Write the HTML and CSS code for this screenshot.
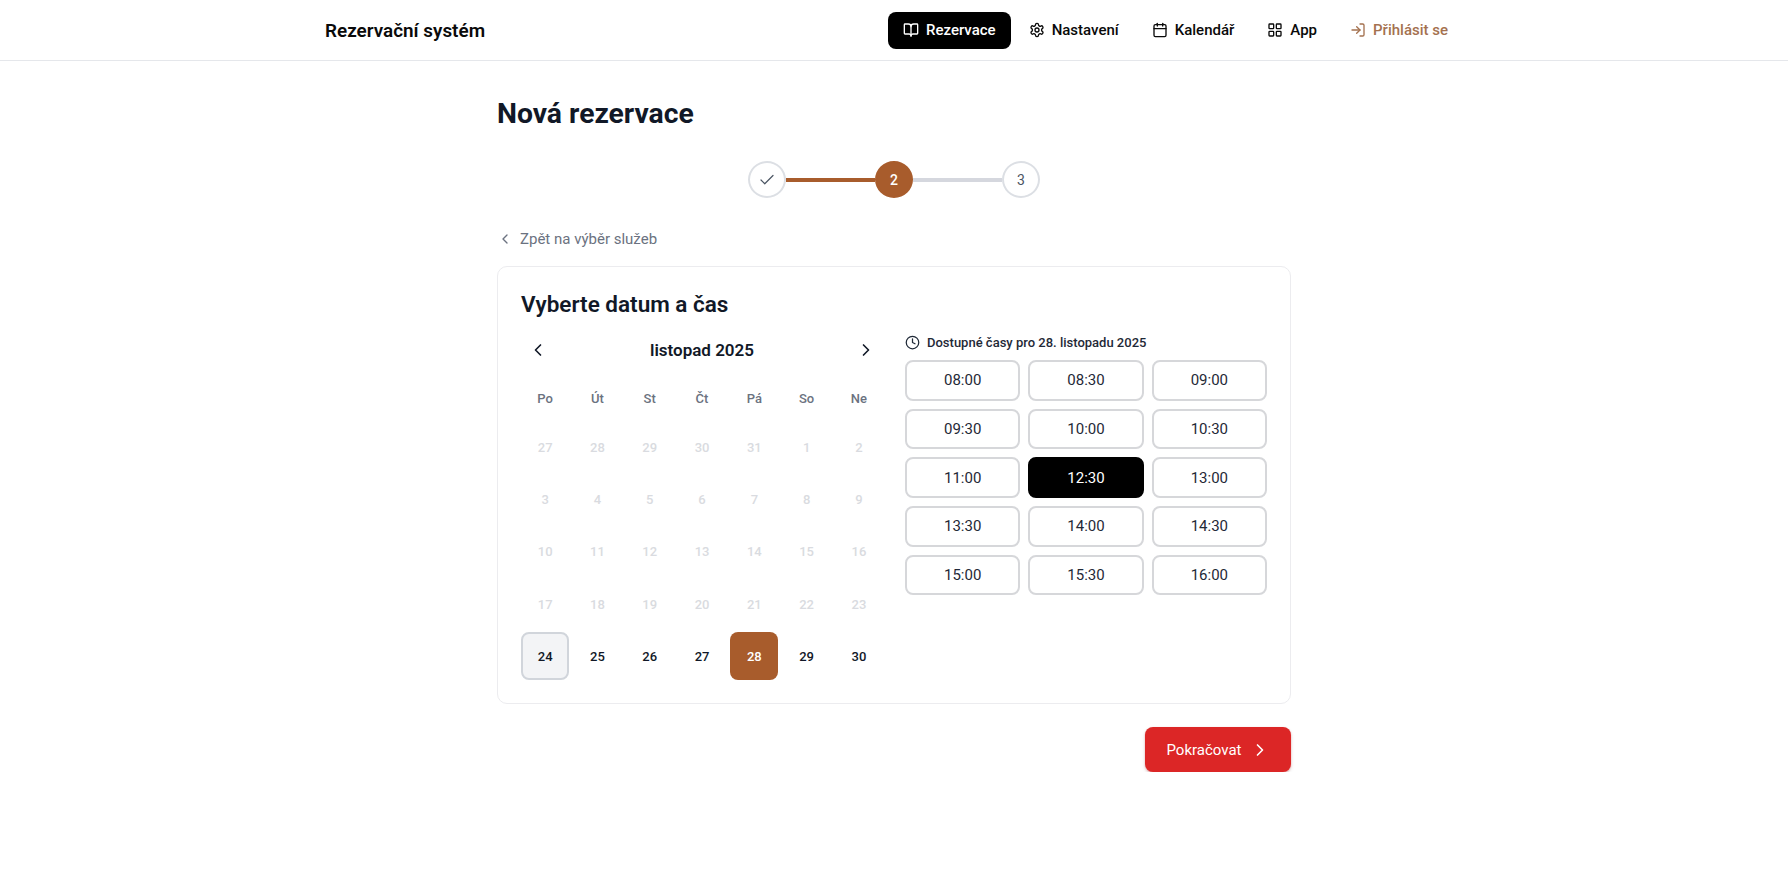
FILE: index.html
```html
<!DOCTYPE html>
<html lang="cs">
<head>
<meta charset="utf-8">
<title>Nová rezervace</title>
<link rel="stylesheet" href="styles.css">
</head>
<body>
<svg class="sprite" width="0" height="0" aria-hidden="true">
  <symbol id="i-book" viewBox="0 0 24 24"><path d="M12 7v14"/><path d="M3 18a1 1 0 0 1-1-1V4a1 1 0 0 1 1-1h5a4 4 0 0 1 4 4 4 4 0 0 1 4-4h5a1 1 0 0 1 1 1v13a1 1 0 0 1-1 1h-6a3 3 0 0 0-3 3 3 3 0 0 0-3-3z"/></symbol>
  <symbol id="i-cog" viewBox="0 0 24 24"><path d="M12.22 2h-.44a2 2 0 0 0-2 2v.18a2 2 0 0 1-1 1.73l-.43.25a2 2 0 0 1-2 0l-.15-.08a2 2 0 0 0-2.73.73l-.22.38a2 2 0 0 0 .73 2.73l.15.1a2 2 0 0 1 1 1.72v.51a2 2 0 0 1-1 1.74l-.15.09a2 2 0 0 0-.73 2.73l.22.38a2 2 0 0 0 2.73.73l.15-.08a2 2 0 0 1 2 0l.43.25a2 2 0 0 1 1 1.73V20a2 2 0 0 0 2 2h.44a2 2 0 0 0 2-2v-.18a2 2 0 0 1 1-1.73l.43-.25a2 2 0 0 1 2 0l.15.08a2 2 0 0 0 2.73-.73l.22-.39a2 2 0 0 0-.73-2.73l-.15-.08a2 2 0 0 1-1-1.74v-.5a2 2 0 0 1 1-1.74l.15-.09a2 2 0 0 0 .73-2.73l-.22-.38a2 2 0 0 0-2.73-.73l-.15.08a2 2 0 0 1-2 0l-.43-.25a2 2 0 0 1-1-1.73V4a2 2 0 0 0-2-2z"/><circle cx="12" cy="12" r="3"/></symbol>
  <symbol id="i-cal" viewBox="0 0 24 24"><path d="M8 2v4"/><path d="M16 2v4"/><rect x="3" y="4" width="18" height="18" rx="2"/><path d="M3 10h18"/></symbol>
  <symbol id="i-grid" viewBox="0 0 24 24"><rect x="3" y="3" width="7" height="7" rx="1"/><rect x="14" y="3" width="7" height="7" rx="1"/><rect x="14" y="14" width="7" height="7" rx="1"/><rect x="3" y="14" width="7" height="7" rx="1"/></symbol>
  <symbol id="i-login" viewBox="0 0 24 24"><path d="M15 3h4a2 2 0 0 1 2 2v14a2 2 0 0 1-2 2h-4"/><path d="m10 17 5-5-5-5"/><path d="M15 12H3"/></symbol>
  <symbol id="i-check" viewBox="0 0 24 24"><path d="M20 6 9 17l-5-5"/></symbol>
  <symbol id="i-left" viewBox="0 0 24 24"><path d="m15 18-6-6 6-6"/></symbol>
  <symbol id="i-right" viewBox="0 0 24 24"><path d="m9 18 6-6-6-6"/></symbol>
  <symbol id="i-clock" viewBox="0 0 24 24"><circle cx="12" cy="12" r="10"/><path d="M12 6v6l4 2"/></symbol>
</svg>

<header class="topbar">
  <div class="topbar-inner">
    <a class="brand">Rezervační systém</a>
    <nav class="nav">
      <a class="nav-item nav-item-active"><svg class="icon"><use href="#i-book"/></svg>Rezervace</a>
      <a class="nav-item"><svg class="icon"><use href="#i-cog"/></svg>Nastavení</a>
      <a class="nav-item"><svg class="icon"><use href="#i-cal"/></svg>Kalendář</a>
      <a class="nav-item"><svg class="icon"><use href="#i-grid"/></svg>App</a>
      <a class="nav-item nav-item-login"><svg class="icon"><use href="#i-login"/></svg>Přihlásit se</a>
    </nav>
  </div>
</header>

<main class="page">
  <h1 class="page-title">Nová rezervace</h1>

  <div class="stepper">
    <div class="step"><svg class="icon step-check"><use href="#i-check"/></svg></div>
    <div class="step-line step-line-done"></div>
    <div class="step step-current">2</div>
    <div class="step-line"></div>
    <div class="step">3</div>
  </div>

  <a class="back-link"><svg class="icon"><use href="#i-left"/></svg>Zpět na výběr služeb</a>

  <section class="card">
    <h2 class="card-title">Vyberte datum a čas</h2>
    <div class="columns">
      <div class="calendar">
        <div class="cal-head">
          <svg class="icon cal-arrow"><use href="#i-left"/></svg>
          <span class="cal-month">listopad 2025</span>
          <svg class="icon cal-arrow"><use href="#i-right"/></svg>
        </div>
        <div class="weekdays">
          <span>Po</span><span>Út</span><span>St</span><span>Čt</span><span>Pá</span><span>So</span><span>Ne</span>
        </div>
        <div class="days">
          <span class="day day-off">27</span><span class="day day-off">28</span><span class="day day-off">29</span><span class="day day-off">30</span><span class="day day-off">31</span><span class="day day-off">1</span><span class="day day-off">2</span>
          <span class="day day-off">3</span><span class="day day-off">4</span><span class="day day-off">5</span><span class="day day-off">6</span><span class="day day-off">7</span><span class="day day-off">8</span><span class="day day-off">9</span>
          <span class="day day-off">10</span><span class="day day-off">11</span><span class="day day-off">12</span><span class="day day-off">13</span><span class="day day-off">14</span><span class="day day-off">15</span><span class="day day-off">16</span>
          <span class="day day-off">17</span><span class="day day-off">18</span><span class="day day-off">19</span><span class="day day-off">20</span><span class="day day-off">21</span><span class="day day-off">22</span><span class="day day-off">23</span>
          <span class="day day-today">24</span><span class="day">25</span><span class="day">26</span><span class="day">27</span><span class="day day-selected">28</span><span class="day">29</span><span class="day">30</span>
        </div>
      </div>
      <div class="times">
        <div class="times-label"><svg class="icon times-clock"><use href="#i-clock"/></svg>Dostupné časy pro 28. listopadu 2025</div>
        <div class="time-grid">
          <button class="time">08:00</button><button class="time">08:30</button><button class="time">09:00</button>
          <button class="time">09:30</button><button class="time">10:00</button><button class="time">10:30</button>
          <button class="time">11:00</button><button class="time time-selected">12:30</button><button class="time">13:00</button>
          <button class="time">13:30</button><button class="time">14:00</button><button class="time">14:30</button>
          <button class="time">15:00</button><button class="time">15:30</button><button class="time">16:00</button>
        </div>
      </div>
    </div>
  </section>

  <div class="actions">
    <button class="primary">Pokračovat<svg class="icon"><use href="#i-right"/></svg></button>
  </div>
</main>
</body>
</html>
```
FILE: styles.css
```css
* { box-sizing: border-box; }
html, body { margin: 0; padding: 0; }
body {
  background: #fff;
  color: #111827;
  font-family: Roboto, "Liberation Sans", sans-serif;
  font-size: 14px;
}
.sprite { position: absolute; }
.icon {
  width: 16px;
  height: 16px;
  flex: none;
  fill: none;
  stroke: currentColor;
  stroke-width: 2;
  stroke-linecap: round;
  stroke-linejoin: round;
}

.topbar {
  height: 61px;
  border-bottom: 1px solid #e5e7eb;
}
.topbar-inner {
  width: 1138px;
  height: 60px;
  margin: 0 auto;
  display: flex;
  align-items: center;
  justify-content: space-between;
}
.brand {
  font-size: 18.9px;
  font-weight: 600;
  color: #0a0a0a;
}
.nav { display: flex; gap: 3px; }
.nav-item {
  height: 37px;
  padding: 0 15px;
  display: flex;
  align-items: center;
  gap: 7px;
  border-radius: 8px;
  font-size: 15px;
  font-weight: 500;
  color: #0a0a0a;
}
.nav-item-active { background: #000; color: #fff; }
.nav-item-login { color: #a4714f; }

.page {
  width: 794px;
  margin: 0 auto;
  padding-top: 35px;
}
.page-title {
  margin: 0;
  font-size: 28.3px;
  line-height: 36px;
  font-weight: 700;
  color: #111827;
}
.stepper {
  margin-top: 29px;
  display: flex;
  align-items: center;
  justify-content: center;
}
.step {
  width: 38px;
  height: 37px;
  border-radius: 50%;
  border: 2px solid #dcdfe4;
  background: #fff;
  display: flex;
  align-items: center;
  justify-content: center;
  font-size: 14px;
  color: #4b5563;
}
.step-check { width: 18px; height: 18px; stroke-width: 1.6; }
.step-current {
  background: #a85c2c;
  border-color: #a85c2c;
  color: #fff;
  font-weight: 500;
}
.step-line {
  width: 89px;
  height: 4px;
  background: #d5d7de;
}
.step-line-done { background: #a85c2c; }

.back-link {
  margin-top: 31px;
  height: 20px;
  display: flex;
  align-items: center;
  gap: 7px;
  color: #6b7280;
  font-size: 15px;
}

.card {
  margin-top: 17px;
  height: 438px;
  padding: 23px;
  border: 1px solid #ececef;
  border-radius: 10px;
  background: #fff;
}
.card-title {
  margin: 0;
  font-size: 22.5px;
  line-height: 29px;
  font-weight: 600;
  color: #111827;
}
.columns {
  margin-top: 12px;
  display: grid;
  grid-template-columns: 362px 1fr;
  column-gap: 22px;
}
.cal-head {
  height: 38px;
  padding: 0 7px;
  display: flex;
  align-items: center;
  justify-content: space-between;
}
.cal-arrow { width: 20px; height: 20px; color: #111827; }
.cal-month {
  font-size: 17px;
  font-weight: 600;
  color: #111827;
}
.weekdays, .days {
  display: grid;
  grid-template-columns: repeat(7, 1fr);
  column-gap: 4px;
}
.weekdays {
  margin-top: 20px;
  margin-bottom: 14px;
  line-height: 20px;
  text-align: center;
  font-size: 13px;
  font-weight: 500;
  color: #6b7280;
}
.days { row-gap: 4px; }
.day {
  aspect-ratio: 1;
  display: flex;
  align-items: center;
  justify-content: center;
  border-radius: 8px;
  font-size: 13px;
  font-weight: 500;
  color: #111827;
}
.day-off { color: #d9dbe0; }
.day-today { background: #f3f4f6; border: 2px solid #d1d5db; }
.day-selected { background: #a85c2c; color: #fff; }

.times-label {
  height: 22px;
  display: flex;
  align-items: center;
  gap: 7px;
  font-size: 13px;
  font-weight: 500;
  color: #1f2937;
}
.times-clock { width: 15px; height: 15px; stroke-width: 2; }
.time-grid {
  margin-top: 7px;
  display: grid;
  grid-template-columns: repeat(3, 1fr);
  gap: 8px;
}
.time {
  height: 40.67px;
  padding: 0;
  border: 2px solid #d6d7da;
  border-radius: 8px;
  background: #fff;
  font-family: inherit;
  font-size: 15px;
  color: #1f2937;
}
.time-selected { background: #000; border-color: #000; color: #fff; }

.actions {
  margin-top: 23px;
  display: flex;
  justify-content: flex-end;
}
.primary {
  width: 146px;
  height: 45px;
  padding: 0;
  display: flex;
  align-items: center;
  justify-content: center;
  gap: 8px;
  border: 0;
  border-radius: 8px;
  background: #dc2626;
  color: #fff;
  font-family: inherit;
  font-size: 15px;
  font-weight: 400;
  box-shadow: 0 2px 4px rgba(0, 0, 0, 0.1), 0 1px 2px rgba(220, 38, 38, 0.35);
}
.primary .icon { width: 20px; height: 20px; }
```
